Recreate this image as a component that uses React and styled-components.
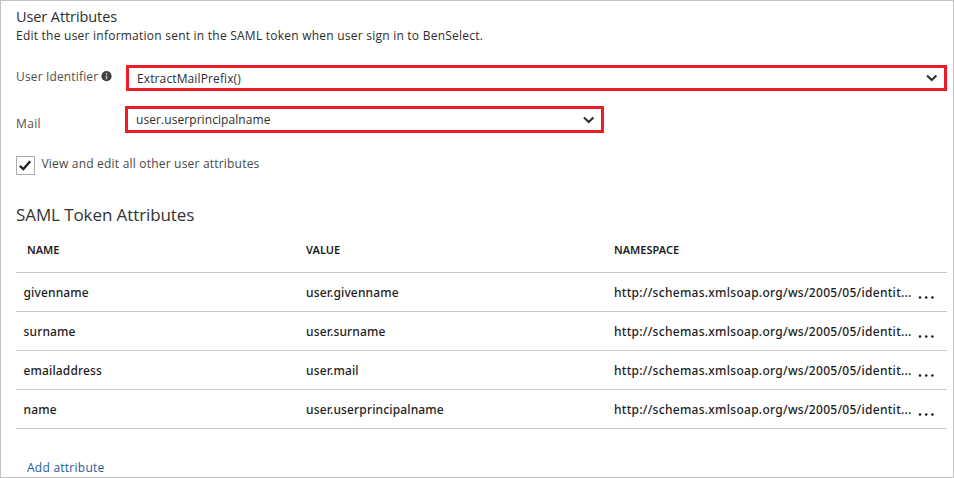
import React from 'react';
import styled, { createGlobalStyle } from 'styled-components';

const GlobalStyle = createGlobalStyle`
  * { box-sizing: border-box; }
  body {
    margin: 0;
    background: #fff;
    color: #2d2d2d;
    font: 12px/16px "Open Sans", "Noto Sans", sans-serif;
  }
`;

const Panel = styled.main`
  width: 954px;
  height: 478px;
  overflow: hidden;
  padding: 7px 6px 0 15px;
  border: 1px solid #c3c3c3;
`;

const Title = styled.h2`
  margin: 0;
  height: 20px;
  font-size: 14.5px;
  font-weight: 400;
  line-height: 17px;
  letter-spacing: -0.09px;
`;

const Description = styled.p`
  margin: 0;
  height: 16px;
  letter-spacing: 0.235px;
  white-space: nowrap;
`;

const Field = styled.div`
  display: flex;
  align-items: flex-start;
  margin-top: ${p => p.$gap}px;
`;

const Label = styled.label`
  display: flex;
  align-items: flex-start;
  gap: 2.5px;
  width: ${p => p.$width}px;
  height: 16px;
  margin-top: ${p => p.$drop}px;
  color: #505050;
  letter-spacing: ${p => p.$tracking}px;
`;

const Select = styled.div`
  display: flex;
  align-items: center;
  justify-content: space-between;
  width: ${p => p.$width}px;
  height: ${p => p.$height}px;
  padding: 0 6px 0 8px;
  border: 3px solid #ed1c24;
  letter-spacing: ${p => p.$tracking}px;
`;

const SelectText = styled.span`
  padding-top: 1px;
`;

const CheckRow = styled.div`
  display: flex;
  align-items: flex-start;
  gap: 6.5px;
  height: 19px;
  margin-top: 23px;
  color: #484848;
  letter-spacing: 0.2px;
  line-height: 15px;
`;

const Checkbox = styled.span`
  display: flex;
  align-items: center;
  justify-content: center;
  width: 19px;
  height: 19px;
  border: 1px solid #ababab;
`;

const Heading = styled.h1`
  margin: 28px 0 0;
  height: 25px;
  font-size: 17px;
  font-weight: 400;
  line-height: 23px;
  letter-spacing: -0.09px;
  color: #333;
`;

const Row = styled.div`
  display: grid;
  grid-template-columns: 290px 308px 304px 1fr;
  align-items: center;
  height: ${p => (p.$header ? 45 : 39)}px;
  border-bottom: 1px solid #c8c8c8;
`;

const HeaderCell = styled.span`
  padding-left: ${p => (p.$first ? 11 : 0)}px;
  font-family: "Noto Sans", "Open Sans", sans-serif;
  font-size: 11px;
  font-weight: 600;
  color: #1d1d1d;
`;

const Cell = styled.span`
  padding: 1px 0 0 ${p => (p.$first ? 7.5 : 0)}px;
  color: #1d1d1d;
  font-family: "Noto Sans", "Open Sans", sans-serif;
  font-weight: 500;
  letter-spacing: ${p => p.$tracking || 0.15}px;
  white-space: nowrap;
`;

const AddLink = styled.a`
  display: block;
  margin: 31px 0 0 11px;
  color: #1f5c9a;
  letter-spacing: 0.25px;
`;

const InfoIcon = () => (
  <svg width="11" height="14" viewBox="0 0 11 14">
    <circle cx="5.5" cy="7.2" r="5.1" fill="#3f3f3f" />
    <path d="M5.5 4v1.5M5.5 6.4v3.8" fill="none" stroke="#c4c4c4" strokeWidth="1.5" />
  </svg>
);

const Chevron = () => (
  <svg width="12" height="8" viewBox="0 0 12 8">
    <path d="M1 1.5L5.7 6L10.4 1.5" fill="none" stroke="#303030" strokeWidth="2.2" />
  </svg>
);

const Check = () => (
  <svg width="13" height="11" viewBox="0 0 13 11">
    <path d="M0.8 5.8L4.4 9L11.2 1.2" fill="none" stroke="#222" strokeWidth="2.3" />
  </svg>
);

const Dots = () => (
  <svg width="17" height="3" viewBox="0 0 17 3">
    <circle cx="2" cy="1.5" r="1.3" fill="#1c1c1c" />
    <circle cx="8.2" cy="1.5" r="1.3" fill="#1c1c1c" />
    <circle cx="14.4" cy="1.5" r="1.3" fill="#1c1c1c" />
  </svg>
);

const Menu = styled.span`
  display: flex;
  padding-top: 11px;
`;

const namespaceText = 'http://schemas.xmlsoap.org/ws/2005/05/identit...';
const attributes = [
  ['givenname', 'user.givenname'],
  ['surname', 'user.surname'],
  ['emailaddress', 'user.mail'],
  ['name', 'user.userprincipalname'],
];

export default function App() {
  return (
    <>
      <GlobalStyle />
      <Panel>
        <Title>User Attributes</Title>
        <Description>
          Edit the user information sent in the SAML token when user sign in to BenSelect.
        </Description>
        <Field $gap={21}>
          <Label $width={110} $drop={4} $tracking={0.15}>User Identifier <InfoIcon /></Label>
          <Select $width={821} $height={26} $tracking={0.12}>
            <SelectText>ExtractMailPrefix()</SelectText><Chevron />
          </Select>
        </Field>
        <Field $gap={15}>
          <Label $width={109} $drop={10} $tracking={0.35}>Mail</Label>
          <Select $width={479} $height={27} $tracking={0.07}>
            <SelectText>user.userprincipalname</SelectText><Chevron />
          </Select>
        </Field>
        <CheckRow>
          <Checkbox><Check /></Checkbox>
          View and edit all other user attributes
        </CheckRow>
        <Heading>SAML Token Attributes</Heading>
        <Row $header>
          <HeaderCell $first>NAME</HeaderCell>
          <HeaderCell>VALUE</HeaderCell>
          <HeaderCell>NAMESPACE</HeaderCell>
        </Row>
        {attributes.map(([name, value]) => (
          <Row key={name}>
            <Cell $first>{name}</Cell>
            <Cell>{value}</Cell>
            <Cell $tracking={0.28}>{namespaceText}</Cell>
            <Menu><Dots /></Menu>
          </Row>
        ))}
        <AddLink>Add attribute</AddLink>
      </Panel>
    </>
  );
}
